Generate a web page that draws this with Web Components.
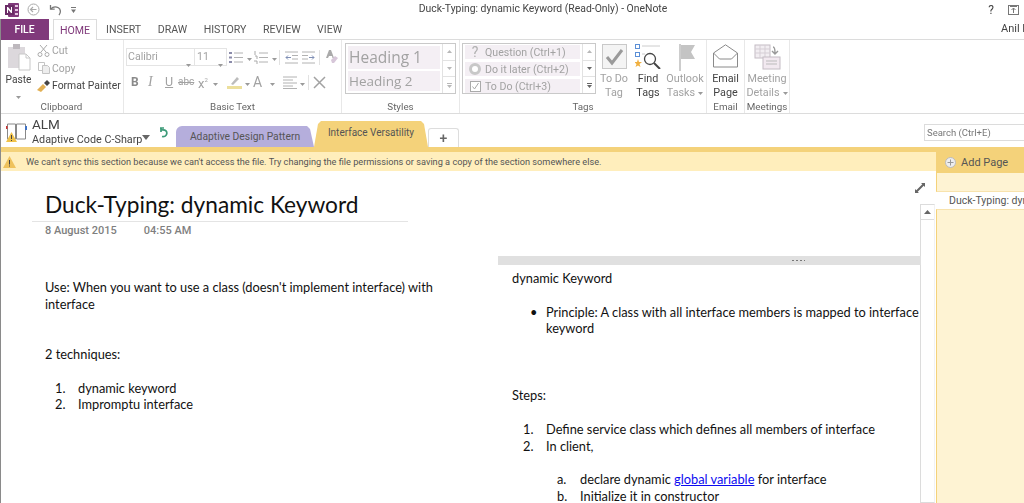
<!DOCTYPE html>
<html>
<head>
<meta charset="utf-8">
<title>Duck-Typing: dynamic Keyword (Read-Only) - OneNote</title>
<style>
  html, body { margin: 0; height: 503px; overflow: hidden; background: #fff; }
  body { font-family: Roboto, "Liberation Sans", sans-serif; color: #444; }
  svg { display: block; }
</style>
</head>
<body>
<one-note></one-note>
<script>
function define(name, css, html, setup) {
  customElements.define(name, class extends HTMLElement {
    connectedCallback() {
      if (this.shadowRoot) return;
      const root = this.attachShadow({ mode: "open" });
      const inner = typeof html === "function" ? html(this) : html;
      root.innerHTML = `<style>${css}</style>${inner}`;
      if (setup) setup(this, root);
    }
  });
}

const drop = `<svg width="5" height="3" viewBox="0 0 5 3"><path d="M0 0h5L2.5 3z" fill="#9a9a9a"/></svg>`;

define("title-bar", `
  :host { display: flex; align-items: center; height: 19px; position: relative; font-size: 10.4px; color: #444; }
  .left { display: flex; align-items: center; margin-left: 5px; }
  .title { position: absolute; left: 0; right: 0; padding-left: 62px; text-align: center; white-space: nowrap; top: 2px; }
  .right { margin-left: auto; display: flex; align-items: center; gap: 14px; margin-right: 5px; font-size: 12px; }
`, `
  <div class="left">
    <svg width="15" height="14" viewBox="0 0 15 14">
      <rect x="3" y="0" width="11" height="14" rx="1" fill="#80397b"/>
      <rect x="10" y="2" width="3" height="2" fill="#e6c8e2"/><rect x="10" y="6" width="3" height="2" fill="#e6c8e2"/><rect x="10" y="10" width="3" height="2" fill="#e6c8e2"/>
      <rect x="0" y="2" width="9" height="10" fill="#6a2c66"/>
      <path d="M2 10V4h1l3 3.6V4h1v6H6L3 6.4V10z" fill="#fff"/>
    </svg>
    <svg style="margin-left:7px" width="13" height="13" viewBox="0 0 13 13" fill="none" stroke="#a9a9a9">
      <circle cx="6.5" cy="6.5" r="5.5"/><path d="M9.5 6.5h-6M6 4 3.5 6.5 6 9" stroke-width="1.2"/>
    </svg>
    <svg style="margin-left:9px" width="13" height="12" viewBox="0 0 13 12" fill="none" stroke="#777" stroke-width="1.3">
      <path d="M1.5 1v4.2h4.2"/><path d="M1.8 5C4 2.6 7 2.4 9.4 3.8c2.5 1.5 2.6 5 .6 7.4"/>
    </svg>
    <svg style="margin-left:9px" width="5" height="6" viewBox="0 0 5 6"><path d="M0 0h5v1H0zM0 2.5h5L2.5 6z" fill="#777"/></svg>
  </div>
  <div class="title">Duck-Typing: dynamic Keyword (Read-Only) - OneNote</div>
  <div class="right">
    <span>?</span>
    <svg width="11" height="10" viewBox="0 0 11 10" fill="none" stroke="#777"><rect x=".5" y=".5" width="10" height="9"/><path d="M5.5 8V3M3.5 5l2-2 2 2M2 1.5h7"/></svg>
  </div>
`);

define("menu-tabs", `
  :host { display: flex; height: 21px; box-sizing: border-box; border-bottom: 1px solid #dcdcdc; font-size: 10.6px; color: #555; position: relative; white-space: nowrap; }
  .file { width: 49px; height: 21px; background: #80397b; color: #fff; display: flex; align-items: center; justify-content: center; font-weight: 500; font-size: 10.4px; }
  .home { width: 44px; height: 21px; margin-left: 4px; box-sizing: border-box; border: 1px solid #dcdcdc; border-bottom: 0; background: #fff; color: #80397b; display: flex; align-items: center; justify-content: center; }
  .tabs { display: flex; align-items: center; gap: 16.5px; margin-left: 9px; height: 20px; }
  .user { position: absolute; left: 1001px; top: 3px; font-size: 11px; color: #444; }
`, `
  <div class="file">FILE</div>
  <div class="home">HOME</div>
  <div class="tabs"><span>INSERT</span><span>DRAW</span><span>HISTORY</span><span>REVIEW</span><span>VIEW</span></div>
  <div class="user">Anil K</div>
`);

define("ribbon-group", `
  :host { display: flex; flex-direction: column; flex: none; box-sizing: border-box; height: 73px; border-right: 1px solid #e8e8e8; position: relative; font-size: 10.6px; }
  .body { flex: 1; min-height: 0; position: relative; }
  .label { height: 12px; text-align: center; font-size: 9.8px; color: #666; line-height: 12px; white-space: nowrap; }
`, (el) => `
  <div class="body"><slot></slot></div>
  <div class="label">${el.getAttribute("label")}</div>
`, (el) => { el.style.width = el.getAttribute("w") + "px"; });

define("big-button", `
  :host { display: flex; flex-direction: column; flex: none; align-items: center; font-size: 10.8px; line-height: 14px; text-align: center; white-space: nowrap; color: #a2a2a2; }
  :host([on]) { color: #444; }
  .icon { height: 28px; display: flex; align-items: flex-start; justify-content: center; margin-top: 4px; }
  .line { display: flex; align-items: center; gap: 3px; }
`, (el) => `
  <div class="icon"><slot name="icon"></slot></div>
  <div>${el.getAttribute("a")}</div>
  <div class="line">${el.getAttribute("b")}${el.hasAttribute("drop") ? drop : ""}</div>
`);

define("clipboard-tools", `
  :host { display: flex; color: #a2a2a2; font-size: 10.4px; white-space: nowrap; }
  .paste { width: 37px; flex: none; display: flex; flex-direction: column; align-items: center; color: #444; box-sizing: border-box; font-size: 10.2px; }
  .paste svg:first-child { margin-top: 4px; }
  .paste span { margin-top: 2px; line-height: 14px; }
  .list { display: flex; flex-direction: column; margin-top: 2px; }
  .row { display: flex; align-items: center; height: 17.5px; gap: 2px; }
  .row svg { width: 13px; flex: none; }
  .on { color: #444; }
`, `
  <div class="paste">
    <svg width="24" height="27" viewBox="0 0 24 27">
      <rect x="1" y="3" width="17" height="21" fill="#dcd8dc"/><rect x="6" y="0" width="7" height="5" fill="#bdb8bd"/>
      <path d="M12 10h7l4 4v12H12z" fill="#fff" stroke="#c8c8c8"/><path d="M19 10v4h4" fill="none" stroke="#c8c8c8"/>
    </svg>
    <span>Paste</span>
    <div style="margin-top:3px">${drop}</div>
  </div>
  <div class="list">
    <div class="row"><svg height="12" viewBox="0 0 13 12" fill="none" stroke="#a9a9a9"><path d="M3 0l6 7M10 0 4 7"/><circle cx="3" cy="9.5" r="2"/><circle cx="10" cy="9.5" r="2"/></svg><span>Cut</span></div>
    <div class="row"><svg height="12" viewBox="0 0 13 12" fill="none" stroke="#c4c4c4"><path d="M1.5.5h6v8h-6z"/><path d="M5.5 3.5h5l2 2v6h-7z" fill="#eee"/></svg><span>Copy</span></div>
    <div class="row on"><svg height="12" viewBox="0 0 13 12"><path d="M0 10 6 4l3 3-5 5z" fill="#e2b054"/><path d="M7 3l3-3 3 3-3 3z" fill="#444"/></svg><span>Format Painter</span></div>
  </div>
`);

define("basic-text-tools", `
  :host { display: block; color: #a2a2a2; padding: 8px 0 0 2px; white-space: nowrap; }
  .row { display: flex; align-items: center; height: 18px; }
  .row + .row { margin-top: 7px; }
  .box { height: 18px; box-sizing: border-box; border: 1px solid #e4e4e4; font-size: 10.6px; line-height: 16px; padding-left: 1px; position: relative; }
  .box i { position: absolute; right: 3px; top: 7px; }
  .sep { width: 1px; height: 15px; background: #e2e2e2; }
  b, em, u, span.t { display: block; font-size: 12px; line-height: 18px; font-style: normal; }
  .row > * { flex: none; }
`, `
  <div class="row">
    <div class="box" style="width:69px">Calibri<i>${drop}</i></div>
    <div class="box" style="width:32px;border-left:0;padding-left:2px">11<i>${drop}</i></div>
    <svg style="margin-left:2px" width="14" height="13" viewBox="0 0 14 13" fill="none" stroke="#b2b2b2"><path d="M5 2h9M5 6.500h9M5 11h9"/><path d="M0 2h3M0 6.500h3M0 11h3" stroke="#8b8baa" stroke-width="2"/></svg>
    <div style="margin-left:4px">${drop}</div>
    <svg style="margin-left:2px" width="14" height="13" viewBox="0 0 14 13" fill="none" stroke="#b2b2b2"><path d="M5 2h9M5 6.500h9M5 11h9"/><path d="M1 0v4M1 5h2v3M0 10h3v3" stroke="#aaa"/></svg>
    <div style="margin-left:4px">${drop}</div>
    <div class="sep" style="margin-left:2px"></div>
    <svg style="margin-left:5px" width="13" height="13" viewBox="0 0 13 13" fill="none" stroke="#b2b2b2"><path d="M0 1h13M7 4.500h6M7 8h6M0 12h13"/><path d="M6 6.500H1M3 4.500l-2 2 2 2" stroke="#7f8fb5"/></svg>
    <svg style="margin-left:4px" width="13" height="13" viewBox="0 0 13 13" fill="none" stroke="#b2b2b2"><path d="M0 1h13M0 4.500h6M0 8h6M0 12h13"/><path d="M7 6.500h5M10 4.500l2 2-2 2" stroke="#7f8fb5"/></svg>
    <div class="sep" style="margin-left:4px"></div>
    <svg style="margin-left:6px" width="12" height="14" viewBox="0 0 12 14"><path d="M3 0h2l3 8H6.500L6 6H3l-1 2H0z" fill="#aaa"/><path d="M5 10l4-4 3 2-4 5H6z" fill="#d7c7d9"/></svg>
  </div>
  <div class="row">
    <b style="margin-left:5px;width:17px;color:#8a8a8a">B</b>
    <em style="width:17px;font-family:'Liberation Serif',serif;font-style:italic;font-size:14px">I</em>
    <u style="width:13px;font-size:12.500px">U</u>
    <span class="t" style="width:20px;font-size:10px;text-decoration:line-through">abc</span>
    <span class="t" style="width:15px;font-size:13px">x<sup style="font-size:6px;vertical-align:6px">2</sup></span>
    <div>${drop}</div>
    <svg style="margin-left:9px" width="15" height="14" viewBox="0 0 15 14"><path d="M4 9l6-7 2 2-6 6z" fill="#bcbcbc"/><rect y="11" width="15" height="3" fill="#ecdf9c"/></svg>
    <div style="margin-left:3px">${drop}</div>
    <span class="t" style="margin-left:3px;width:17px;font-size:14px">A</span>
    <div>${drop}</div>
    <svg style="margin-left:8px" width="14" height="13" viewBox="0 0 14 13" fill="none" stroke="#b2b2b2"><path d="M0 1h14M0 4h10M0 7h14M0 10h10M0 12.500h14"/></svg>
    <div style="margin-left:3px">${drop}</div>
    <div class="sep" style="margin-left:3px"></div>
    <svg style="margin-left:4px" width="13" height="13" viewBox="0 0 13 13" stroke="#a2a2a2" stroke-width="1.500"><path d="M1 1l11 11M12 1 1 12"/></svg>
  </div>
`);

const galleryCss = `
  :host { display: flex; box-sizing: border-box; height: 51px; margin-top: 3px; border: 1px solid #c9c9c9; white-space: nowrap; }
  .items { flex: 1; display: flex; flex-direction: column; padding: 2px; gap: 2px; min-width: 0; }
  .item { background: #f4eff4; color: #a2a2a2; overflow: hidden; }
  .scroll { width: 12px; flex: none; display: flex; flex-direction: column; border-left: 1px solid #e2e2e2; }
  .scroll div { flex: 1; display: flex; align-items: center; justify-content: center; }
  .scroll div + div { border-top: 1px solid #e2e2e2; }
`;
const scrollCol = (color) => `
  <div class="scroll">
    <div><svg width="5" height="3" viewBox="0 0 5 3"><path d="M0 3h5L2.500 0z" fill="#b8b8b8"/></svg></div>
    <div><svg width="5" height="3" viewBox="0 0 5 3"><path d="M0 0h5L2.500 3z" fill="${color}"/></svg></div>
    <div><svg width="5" height="5" viewBox="0 0 5 5"><path d="M0 0h5v1H0zM0 2h5L2.500 5z" fill="${color}"/></svg></div>
  </div>`;

define("styles-gallery", galleryCss + `
  .item { padding-left: 1px; font-family: "Open Sans", sans-serif; }
  .h1 { height: 24px; font-size: 15.500px; line-height: 23px; }
  .h2 { height: 21px; font-size: 13.500px; line-height: 20px; }
`, `
  <div class="items"><div class="item h1">Heading 1</div><div class="item h2">Heading 2</div></div>
  ${scrollCol("#b8b8b8")}
`);

define("tags-gallery", galleryCss + `
  .items { gap: 3px; padding: 1px 2px 0; }
  .item { flex: 1; display: flex; align-items: center; font-size: 10.600px; }
  .ic { width: 20px; display: flex; justify-content: center; flex: none; }
`, `
  <div class="items">
    <div class="item"><div class="ic" style="font-size:14px;color:#b0b0b0">?</div>Question (Ctrl+1)</div>
    <div class="item"><div class="ic"><svg width="12" height="12" viewBox="0 0 12 12"><circle cx="6" cy="6" r="4.500" fill="#fff" stroke="#c8c8c8" stroke-width="3"/></svg></div>Do it later (Ctrl+2)</div>
    <div class="item"><div class="ic"><svg width="11" height="11" viewBox="0 0 11 11" fill="none"><rect x=".5" y=".5" width="10" height="10" stroke="#aaa" fill="#fff"/><path d="M2.500 5.500l2 2.500 4-6" stroke="#aaa"/></svg></div>To Do (Ctrl+3)</div>
  </div>
  ${scrollCol("#666")}
`);

define("ribbon-bar", `
  :host { display: flex; height: 74px; box-sizing: border-box; border-bottom: 1px solid #dcdcdc; overflow: hidden; }
`, `<slot></slot>`);

define("note-book-icon", `:host { display: block; }`, `
  <svg width="21" height="21" viewBox="0 0 21 21" fill="none">
    <path d="M1.500 3h8v15h-8z" stroke="#888"/><path d="M10.500 3h9v15h-9z" stroke="#888"/>
    <rect x="19" y="5" width="2" height="4" fill="#3f72c4"/><rect x="0" y="5" width="1.500" height="3" fill="#c33"/>
    <path d="M5.500 11 11 21H0z" fill="#f0c24a"/><path d="M5 14h1v4H5zM5 19h1v1H5z" fill="#444"/>
  </svg>
`);

define("section-tab", `
  :host { display: flex; align-items: center; justify-content: center; flex: none; box-sizing: border-box; font-size: 10.300px; color: #555; white-space: nowrap; border-radius: 6px 6px 0 0; }
`, `<slot></slot>`);

define("notebook-bar", `
  :host { display: flex; align-items: flex-end; height: 33px; position: relative; }
  .book { margin: 0 0 1px 6px; align-self: flex-end; }
  .name { width: 113px; margin-left: 5px; color: #444; white-space: nowrap; align-self: flex-start; padding-top: 2px; }
  .name div:first-child { font-size: 13.500px; line-height: 17px; }
  .name div:last-child { font-size: 10.800px; line-height: 14px; }
  .arrow { margin: 0 0 7px -3px; }
  .sync { margin: 0 0 9px 9px; }
  .tabs { display: flex; align-items: flex-end; margin-left: 8px; }
  .one { width: 138px; height: 21px; background: #b5aedc; clip-path: polygon(0 100%, 0 3px, 3px 0, 131px 0, 134px 3px, 138px 100%); }
  .two { width: 114px; height: 26px; background: #f4d27a; padding-bottom: 3px; font-size: 10px; clip-path: polygon(0 100%, 4px 3px, 7px 0, 107px 0, 110px 3px, 114px 100%); }
  .plus { width: 31px; height: 19px; background: #fff; font-size: 14px; font-weight: 500; color: #666; border: 1px solid #ddd; border-bottom: 0; border-radius: 3px 3px 0 0; }
  .search { margin: 0 0 6px auto; width: 100px; height: 17px; box-sizing: border-box; border: 1px solid #dcdcdc; border-right: 0; font-size: 9.500px; line-height: 15px; padding-left: 2px; color: #777; white-space: nowrap; }
`, `
  <note-book-icon class="book"></note-book-icon>
  <div class="name"><div>ALM</div><div>Adaptive Code C-Sharp</div></div>
  <svg class="arrow" width="8" height="5" viewBox="0 0 8 5"><path d="M0 0h8L4 5z" fill="#666"/></svg>
  <svg class="sync" width="9" height="11" viewBox="0 0 9 11" fill="none" stroke="#3c9a78" stroke-width="1.700"><path d="M1 1h4M2 .5v4.500"/><path d="M2 3c5-1 6.500 2 5.500 4.500C7 9 5 10 3 9.500"/></svg>
  <div class="tabs">
    <section-tab class="one">Adaptive Design Pattern</section-tab>
    <section-tab class="two">Interface Versatility</section-tab>
    <section-tab class="plus">+</section-tab>
  </div>
  <div class="search">Search (Ctrl+E)</div>
`);

define("info-bar", `
  :host { display: flex; align-items: center; height: 19px; background: #ffeebc; font-size: 9.200px; color: #555; white-space: nowrap; }
  svg { margin: 0 10px 0 3px; flex: none; }
`, `
  <svg width="13" height="12" viewBox="0 0 13 12"><path d="M6.500 0 13 12H0z" fill="#efc25c"/><path d="M6 4h1v4.500H6zM6 9.500h1v1H6z" fill="#444"/></svg>
  <slot></slot>
`);

define("note-line", `
  :host { display: flex; height: 16.750px; line-height: 16.750px; white-space: nowrap; position: relative; }
  .marker { position: absolute; top: 0; }
  .text { margin-left: calc(var(--indent, 34px) * var(--level)); }
`, (el) => {
  const level = +(el.getAttribute("level") || 0);
  const marker = el.getAttribute("marker");
  const back = marker === "•" ? 16 : 23;
  return `${marker ? `<span class="marker" style="left:calc(var(--indent, 34px) * ${level} - ${back}px)">${marker}</span>` : ""}<div class="text" style="--level:${level}"><slot></slot></div>`;
}, (el) => {
  el.style.marginTop = 16.75 * +(el.getAttribute("gap") || 0) + "px";
});

define("note-block", `
  :host { display: block; position: absolute; font-family: "Lato", "Liberation Sans", sans-serif; font-size: 12.800px; color: #111; }
  .handle { display: none; height: 9px; background: #e0e0e0; position: relative; }
  :host([handle]) .handle { display: block; }
  :host([handle]) .text { padding: 5px 0 0 14px; }
  .grip { position: absolute; left: 294px; top: 4px; width: 13px; height: 1px; background: repeating-linear-gradient(90deg, #777 0 2px, transparent 2px 4px); }
`, `<div class="handle"><div class="grip"></div></div><div class="text"><slot></slot></div>`);

define("page-canvas", `
  :host { display: block; position: relative; flex: 1; min-width: 0; overflow: hidden; background: #fff; }
  .title { position: absolute; left: 45px; top: 18px; font-family: "Lato", "Liberation Sans", sans-serif; font-size: 22.700px; line-height: 32px; color: #111; white-space: nowrap; }
  .rule { position: absolute; left: 32px; top: 50px; width: 376px; height: 1px; background: #e4e4e4; }
  .meta { position: absolute; left: 45px; top: 52px; display: flex; gap: 27px; font-size: 11px; font-weight: 500; line-height: 16px; color: #7f7f7f; white-space: nowrap; }
  .expand { position: absolute; left: 915px; top: 12px; }
  .bar { position: absolute; left: 920px; top: 33px; bottom: 0; width: 15px; box-sizing: border-box; border: 1px solid #dcdcdc; border-right-color: #f2f2f2; background: #fff; }
  .bar div { height: 14px; border-bottom: 1px solid #dcdcdc; display: flex; align-items: center; justify-content: center; }
`, `
  <div class="title">Duck-Typing: dynamic Keyword</div>
  <div class="rule"></div>
  <div class="meta"><span>8 August 2015</span><span>04:55 AM</span></div>
  <svg class="expand" width="10" height="10" viewBox="0 0 10 10" fill="#666"><path d="M6 0h4v4L8.700 2.700 2.700 8.700 4 10H0V6l1.300 1.300 6-6z"/></svg>
  <div class="bar"><div><svg width="7" height="4" viewBox="0 0 7 4"><path d="M0 4h7L3.500 0z" fill="#666"/></svg></div></div>
  <slot></slot>
`);

define("page-list", `
  :host { display: flex; flex-direction: column; width: 88px; flex: none; margin-top: -19px; position: relative; font-size: 10.500px; color: #555; white-space: nowrap; overflow: hidden; background: #fef3d3; }
  .add { height: 21px; background: #f4d27a; display: flex; align-items: center; gap: 5px; padding-left: 9px; font-size: 11px; }
  .gap { height: 19px; box-sizing: border-box; background: #fef3d3; border-left: 1px solid #f4d27a; border-bottom: 1px solid #f8e3ad; }
  .page { height: 17px; line-height: 17px; padding-left: 13px; background: #fff; }
  .rest { flex: 1; background: #fef3d3; border-top: 1px solid #f8e3ad; border-left: 1px solid #f4d27a; }
`, `
  <div class="add">
    <svg width="11" height="11" viewBox="0 0 11 11"><circle cx="5.500" cy="5.500" r="5" fill="#eee" stroke="#bbb"/><path d="M5.500 2.500v6M2.500 5.500h6" stroke="#999"/></svg>
    Add Page
  </div>
  <div class="gap"></div>
  <div class="page">Duck-Typing: dynamic Keyword</div>
  <div class="rest"></div>
`);

define("one-note", `
  :host { display: block; width: 1024px; height: 503px; overflow: hidden; position: relative; filter: blur(.3px); }
  .strip { height: 5px; background: #f4d27a; }
  .main { display: flex; height: 332px; }
  .edge { position: absolute; left: 0; top: 19px; bottom: 0; width: 1px; background: #8a8a8a; }
  .pad { display: flex; }
`, `
  <title-bar></title-bar>
  <menu-tabs></menu-tabs>
  <ribbon-bar>
    <ribbon-group label="Clipboard" w="124"><clipboard-tools></clipboard-tools></ribbon-group>
    <ribbon-group label="Basic Text" w="218"><basic-text-tools></basic-text-tools></ribbon-group>
    <ribbon-group label="Styles" w="118"><styles-gallery style="margin-left:3px;margin-right:3px"></styles-gallery></ribbon-group>
    <ribbon-group label="Tags" w="247">
      <div class="pad">
        <tags-gallery style="width:135px;margin-left:2px"></tags-gallery>
        <big-button a="To Do" b="Tag" style="width:36px">
          <svg slot="icon" width="25" height="25" viewBox="0 0 25 25" fill="none"><rect x=".5" y=".5" width="24" height="24" fill="#f4f4f4" stroke="#c9c9c9"/><path d="M5 13l5 6L20 6" stroke="#9a9a9a" stroke-width="3"/></svg>
        </big-button>
        <big-button on a="Find" b="Tags" style="width:32px">
          <svg slot="icon" width="27" height="25" viewBox="0 0 27 25" fill="none"><rect x=".5" y=".5" width="4" height="4" stroke="#5b8fd6"/><rect x=".5" y="8.500" width="4" height="4" stroke="#5b8fd6"/><path d="M7 2h18M7 10h3" stroke="#ccc"/><path d="M3 15l1 3h3l-2.500 2 1 3L3 21.500 .5 23l1-3L-1 18h3z" fill="#f0b040"/><circle cx="15" cy="15" r="5.500" stroke="#444" stroke-width="1.300"/><path d="M19 19l6 6" stroke="#444" stroke-width="2"/></svg>
        </big-button>
        <big-button a="Outlook" b="Tasks" drop style="width:42px">
          <svg slot="icon" style="margin-left:4px" width="17" height="27" viewBox="0 0 17 27"><path d="M1 0v27" stroke="#bcbcbc" stroke-width="1.500"/><path d="M2 1h14l-4 7 4 7H2z" fill="#c4c4c4"/></svg>
        </big-button>
      </div>
    </ribbon-group>
    <ribbon-group label="Email" w="38">
      <big-button on a="Email" b="Page">
        <svg slot="icon" width="25" height="25" viewBox="0 0 25 25" fill="none" stroke="#8a8a8a"><path d="M.5 9 12.500 .8 24.500 9v14H.5z"/><path d="M.5 9l6 6h12l6-6"/></svg>
      </big-button>
    </ribbon-group>
    <ribbon-group label="Meetings" w="45">
      <big-button a="Meeting" b="Details" drop>
        <svg slot="icon" width="27" height="26" viewBox="0 0 27 26" fill="none"><rect x="1" y="1" width="15" height="13" fill="#f2eef2" stroke="#c4bcc4"/><path d="M1 5h15M1 9h15M6 1v13M11 1v13" stroke="#d5ced5"/><rect x="9" y="13" width="17" height="12" fill="#f2e9f0" stroke="#c4bcc4"/><path d="M12 17h11M12 20h11" stroke="#bbb"/><path d="M19 3c2 0 2 3 2 6M18 7l3 3 3-3" stroke="#999" stroke-width="1.400"/></svg>
      </big-button>
    </ribbon-group>
  </ribbon-bar>
  <notebook-bar></notebook-bar>
  <div class="strip"></div>
  <info-bar>We can't sync this section because we can't access the file. Try changing the file permissions or saving a copy of the section somewhere else.</info-bar>
  <div class="main">
    <page-canvas>
      <note-block style="left:45px;top:108px;--indent:33px">
        <note-line>Use: When you want to use a class (doesn't implement interface) with</note-line>
        <note-line>interface</note-line>
        <note-line gap="2">2 techniques:</note-line>
        <note-line gap="1" level="1" marker="1.">dynamic keyword</note-line>
        <note-line level="1" marker="2.">Impromptu interface</note-line>
      </note-block>
      <note-block handle style="left:498px;top:85px;width:423px">
        <note-line>dynamic Keyword</note-line>
        <note-line gap="1" level="1" marker="•">Principle: A class with all interface members is mapped to interface</note-line>
        <note-line level="1">keyword</note-line>
        <note-line gap="3">Steps:</note-line>
        <note-line gap="1" level="1" marker="1.">Define service class which defines all members of interface</note-line>
        <note-line level="1" marker="2.">In client,</note-line>
        <note-line gap="1" level="2" marker="a.">declare dynamic <a href="#" style="color:#0b0bf0">global variable</a> for interface</note-line>
        <note-line level="2" marker="b.">Initialize it in constructor</note-line>
      </note-block>
    </page-canvas>
    <page-list></page-list>
  </div>
  <div class="edge"></div>
`);
</script>
</body>
</html>
